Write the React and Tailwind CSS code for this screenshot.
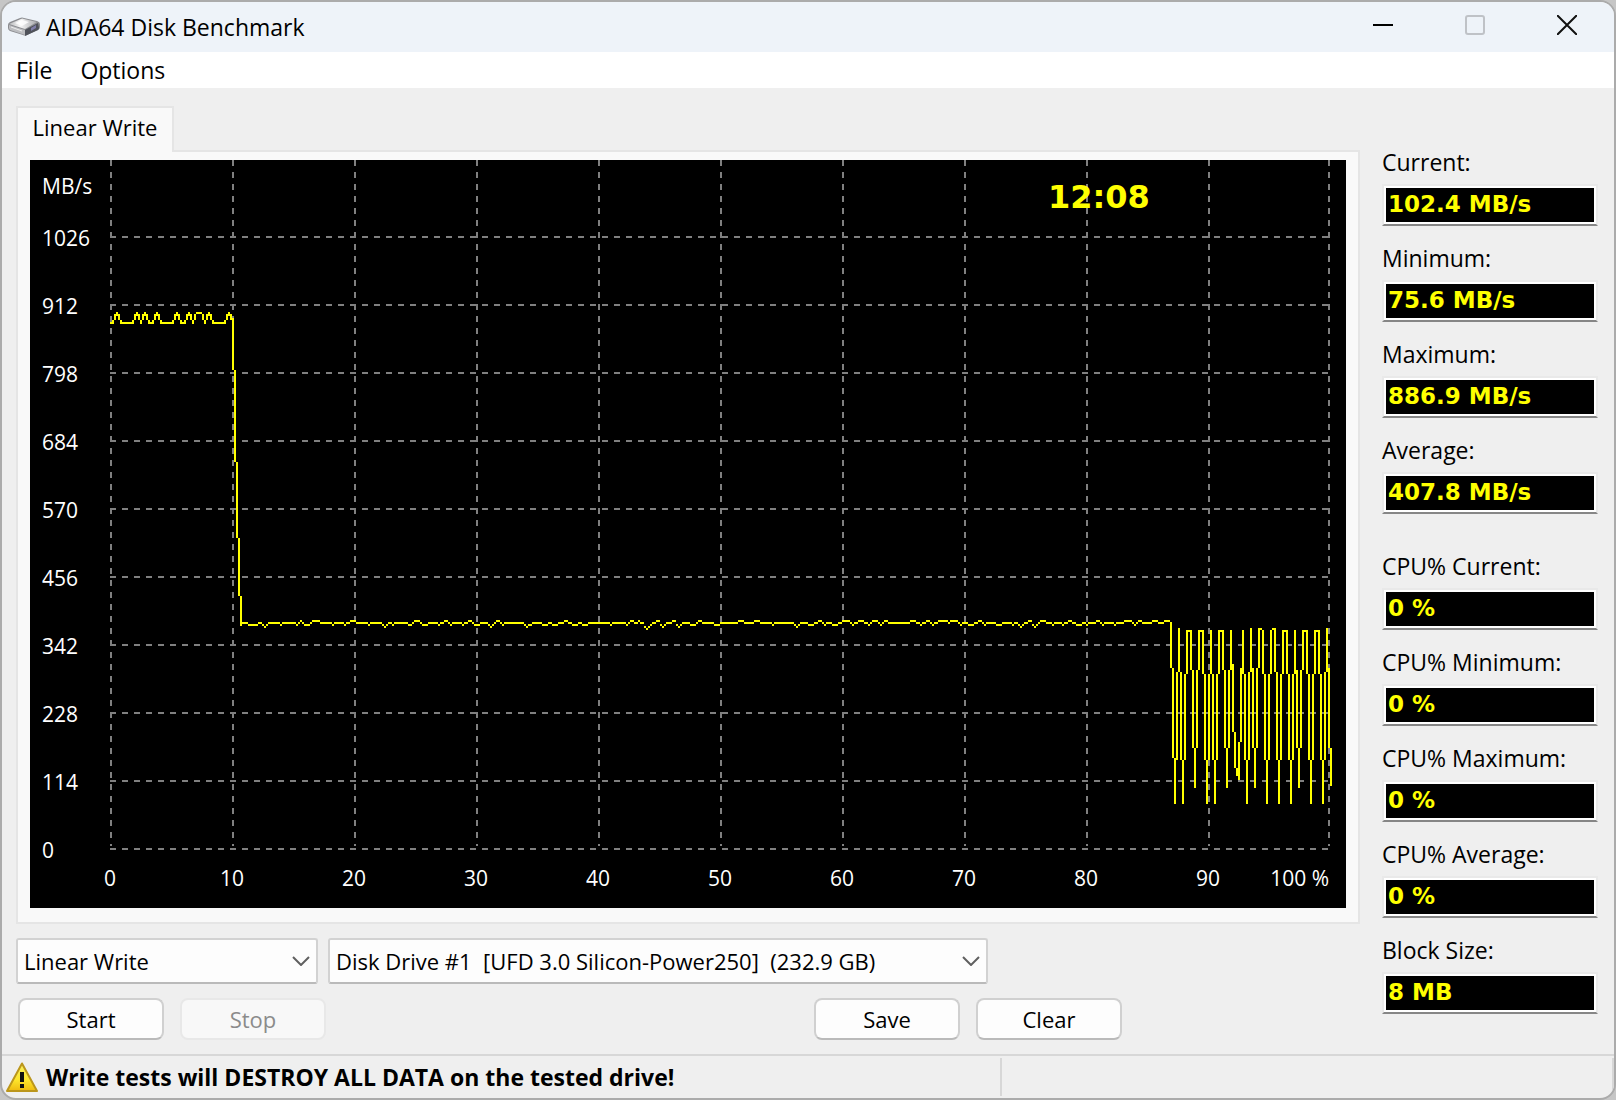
import React from 'react';

const speeds = [
  { id: 'current', label: 'Current:', value: '102.4 MB/s' },
  { id: 'minimum', label: 'Minimum:', value: '75.6 MB/s' },
  { id: 'maximum', label: 'Maximum:', value: '886.9 MB/s' },
  { id: 'average', label: 'Average:', value: '407.8 MB/s' },
];

const cpu = [
  { id: 'cpu-current', label: 'CPU% Current:', value: '0 %' },
  { id: 'cpu-minimum', label: 'CPU% Minimum:', value: '0 %' },
  { id: 'cpu-maximum', label: 'CPU% Maximum:', value: '0 %' },
  { id: 'cpu-average', label: 'CPU% Average:', value: '0 %' },
  { id: 'block-size', label: 'Block Size:', value: '8 MB' },
];

const yLabels = [1026, 912, 798, 684, 570, 456, 342, 228, 114, 0];
const xLabels = [0, 10, 20, 30, 40, 50, 60, 70, 80, 90];

// Columns where the fast cached part of the write peaks
const peaks = [43, 53, 57, 63, 73, 79, 83, 84, 85, 89, 99];

// Steady part of the write: [column, row], each level holds until the next column
const steady = [
  [106, 231], [109, 232], [114, 231], [116, 232], [117, 233], [118, 232], [119, 231], [125, 232],
  [126, 231], [133, 232], [134, 231], [135, 230], [136, 231], [137, 232], [140, 231], [141, 230],
  [145, 231], [151, 232], [152, 231], [157, 232], [158, 231], [160, 230], [163, 231], [169, 232],
  [170, 231], [176, 232], [177, 233], [178, 232], [179, 231], [181, 232], [182, 231], [189, 232],
  [191, 231], [192, 230], [195, 231], [196, 232], [199, 231], [204, 232], [205, 231], [207, 230],
  [209, 231], [210, 232], [211, 231], [216, 232], [217, 231], [219, 230], [221, 231], [222, 232],
  [225, 231], [229, 232], [230, 233], [231, 232], [232, 231], [233, 230], [235, 231], [236, 232],
  [237, 231], [247, 232], [248, 233], [249, 232], [251, 231], [256, 232], [259, 231], [261, 232],
  [264, 231], [267, 230], [269, 231], [271, 232], [274, 231], [276, 232], [279, 231], [290, 232],
  [291, 231], [298, 232], [299, 231], [300, 230], [302, 231], [304, 230], [305, 231], [307, 233],
  [308, 234], [309, 233], [310, 232], [311, 231], [313, 230], [315, 232], [316, 233], [317, 232],
  [318, 231], [321, 230], [323, 232], [324, 233], [325, 232], [326, 231], [330, 232], [333, 231],
  [334, 230], [336, 231], [342, 232], [345, 231], [354, 230], [357, 231], [362, 230], [365, 231],
  [371, 232], [372, 231], [382, 232], [383, 233], [384, 232], [385, 231], [389, 232], [392, 231],
  [394, 230], [396, 231], [397, 232], [398, 231], [401, 232], [404, 231], [406, 230], [410, 231],
  [411, 232], [412, 231], [414, 230], [417, 231], [419, 232], [420, 231], [421, 230], [424, 231],
  [425, 232], [426, 231], [427, 230], [429, 231], [440, 230], [443, 231], [445, 232], [446, 231],
  [448, 230], [450, 231], [451, 232], [452, 231], [454, 230], [459, 231], [460, 230], [464, 231],
  [465, 232], [466, 231], [469, 232], [472, 231], [474, 230], [476, 231], [477, 232], [478, 231],
  [483, 232], [486, 231], [491, 232], [492, 231], [494, 232], [495, 233], [496, 232], [497, 231],
  [499, 230], [501, 232], [502, 233], [503, 232], [504, 231], [505, 230], [508, 231], [511, 232],
  [512, 231], [516, 232], [517, 231], [519, 230], [521, 231], [523, 232], [526, 231], [528, 232],
  [529, 231], [533, 230], [535, 231], [536, 232], [537, 231], [542, 232], [543, 231], [547, 230],
  [551, 231], [552, 232], [553, 231], [554, 230], [556, 231], [561, 230], [564, 231], [567, 230],
  [570, 230],
];

// Unstable tail, one [top, bottom] pair per column starting at 570
const tail = [
  [231, 254], [254, 299], [299, 322], [256, 300], [234, 256], [256, 300], [300, 322], [257, 300],
  [235, 257], [235, 236], [235, 255], [255, 294], [294, 314], [255, 294], [235, 255], [235, 236],
  [235, 257], [257, 300], [300, 322], [257, 300], [235, 257], [257, 300], [300, 322], [257, 300],
  [235, 257], [235, 236], [235, 255], [255, 294], [294, 314], [255, 294], [235, 255], [252, 286],
  [286, 304], [304, 308], [291, 310], [254, 291], [235, 257], [257, 300], [300, 322], [256, 300],
  [234, 256], [254, 294], [294, 314], [254, 294], [234, 254], [234, 235], [235, 257], [257, 300],
  [300, 322], [257, 300], [235, 257], [234, 235], [234, 256], [256, 300], [300, 322], [257, 300],
  [235, 257], [235, 236], [235, 257], [257, 300], [300, 322], [257, 300], [235, 257], [255, 294],
  [294, 314], [255, 294], [235, 255], [235, 236], [235, 257], [257, 300], [300, 322], [257, 300],
  [235, 257], [235, 236], [235, 257], [257, 300], [300, 322], [256, 300], [234, 256], [254, 294],
  [294, 313],
];

// The sudden drop when the cache runs out, starting at column 101
const drop = [[79, 105], [105, 151], [151, 189], [189, 218], [218, 233]];

function bar(x, top, width, bottom) {
  return `M${x} ${top}H${x + width}V${bottom}H${x}Z`;
}

function buildTrace() {
  const parts = [];
  for (let x = 40; x < 101; x++) {
    const distance = Math.min(...peaks.map((p) => Math.abs(p - x)));
    if (distance === 0) {
      parts.push(bar(x, 76, 1, x > 82 && x < 86 ? 77 : 78));
    } else if (distance === 1) {
      parts.push(bar(x, 77, 1, 80));
    } else if (distance === 2) {
      parts.push(bar(x, 80, 1, 82));
    } else {
      parts.push(bar(x, 81, 1, 82));
    }
  }
  drop.forEach(([top, bottom], i) => parts.push(bar(101 + i, top, 1, bottom)));
  steady.slice(0, -1).forEach(([x, y], i) => parts.push(bar(x, y, steady[i + 1][0] - x, y + 1)));
  tail.forEach(([top, bottom], i) => parts.push(bar(570 + i, top, 1, bottom)));
  return parts.join('');
}

const trace = buildTrace();
const gridX = [40, 101, 162, 223, 284, 345, 406, 467, 528, 589, 649];

function Chart() {
  return (
    <svg viewBox="0 0 1316 748" className="block w-full bg-black" role="img" aria-label="Linear write speed">
      <g transform="scale(2)" stroke="#808080" strokeWidth="1" strokeDasharray="3 3" shapeRendering="crispEdges">
        {gridX.map((x) => (
          <line key={x} x1={x + 0.5} x2={x + 0.5} y1="0" y2="343" />
        ))}
        {yLabels.map((v, i) => (
          <line key={v} x1="40" x2="650" y1={38.5 + 34 * i} y2={38.5 + 34 * i} />
        ))}
      </g>
      <g className="fill-white font-['Open_Sans',sans-serif] text-[21px]">
        <text x="12" y="34">MB/s</text>
        {yLabels.map((v, i) => (
          <text key={v} x="12" y={86 + 68 * i}>{v}</text>
        ))}
        {xLabels.map((v, i) => (
          <text key={v} x={80 + 122 * i} y="726" textAnchor="middle">{v}</text>
        ))}
        <text x="1299" y="726" textAnchor="end">100 %</text>
      </g>
      <text x="1018" y="48" className="fill-[#ffff00] font-['DejaVu_Sans',sans-serif] text-[32px] font-bold">12:08</text>
      <path d={trace} transform="scale(2)" fill="#ffff00" shapeRendering="crispEdges" />
    </svg>
  );
}

function Readout({ id, label, value }) {
  return (
    <div className="pt-4">
      <label htmlFor={id} className="block h-8 text-[23px] leading-8">{label}</label>
      <div className="mt-1.5 border-2 border-[#e9e9e9] border-b-[#868686]">
        <output
          id={id}
          className="block h-[38px] border-2 border-white bg-black pl-0.5 font-['DejaVu_Sans',sans-serif] text-[23px] leading-8 font-bold text-[#ffff00]"
        >
          {value}
        </output>
      </div>
    </div>
  );
}

function Dropdown({ label, text, className }) {
  return (
    <div className={`relative ${className}`}>
      <select
        aria-label={label}
        className="h-[46px] w-full appearance-none rounded-[3px] border-2 border-[#d2d2d2] border-b-[#bababa] bg-[#fdfdfd] pl-1.5"
      >
        <option>{text}</option>
      </select>
      <svg viewBox="0 0 18 10" className="pointer-events-none absolute top-[18px] right-2 h-2.5 w-[18px]" fill="none" stroke="#606060" strokeWidth="2">
        <path d="M1 1l8 8 8-8" />
      </svg>
    </div>
  );
}

function PushButton({ children, disabled, className = '' }) {
  return (
    <button
      disabled={disabled}
      className={`h-[42px] w-[146px] rounded-lg border-2 border-[#d0d0d0] border-b-[#bababa] bg-[#fdfdfd] disabled:border-[#e8e8e8] disabled:bg-[#f8f8f8] disabled:text-[#8b8b8b] ${className}`}
    >
      {children}
    </button>
  );
}

function DriveIcon() {
  return (
    <svg viewBox="0 0 32 20" className="h-5 w-8">
      <defs>
        <linearGradient id="lid" x1="0" y1="0" x2="1" y2="0">
          <stop offset="0" stopColor="#b9babc" />
          <stop offset="0.4" stopColor="#f6f6f6" />
          <stop offset="1" stopColor="#a9aaad" />
        </linearGradient>
      </defs>
      <path d="M0 8q0-2 2-3l10-4q2-1 4 0l13 3q3 1 3 3v3q0 2-2 3l-11 5q-2 1-4 0L2 14q-2-1-2-3z" fill="#8b8c90" />
      <path d="M1 7l12-5q1-1 3 0l13 3-12 7z" fill="url(#lid)" />
      <path d="M7 6l7-3 7 2-7 4z" fill="#ffffff" opacity="0.8" />
      <path d="M1 8l16 5v5L2 13q-1-1-1-2z" fill="#bdbec1" />
      <path d="M17 13l13-7 1 5q0 1-1 2l-13 6z" fill="#4f525a" />
      <path d="M23 11l5-3v3l-5 3z" fill="#7f7da8" />
      <path d="M3 10l11 4" stroke="#ededed" strokeWidth="1" />
    </svg>
  );
}

function WarningIcon() {
  return (
    <svg viewBox="0 0 32 30" className="h-[30px] w-8">
      <defs>
        <linearGradient id="warn" x1="0" y1="0" x2="0" y2="1">
          <stop offset="0" stopColor="#f7ef62" />
          <stop offset="0.6" stopColor="#fde52c" />
          <stop offset="1" stopColor="#eeb90e" />
        </linearGradient>
      </defs>
      <path d="M16 1.5L31 29H1z" fill="url(#warn)" stroke="#bb961c" strokeWidth="2" strokeLinejoin="round" />
      <path d="M14 10h4v10h-4zM14 22h4v4h-4z" fill="#111111" />
    </svg>
  );
}

export default function App() {
  return (
    <div className="min-h-screen bg-[#c6c6c6] flex font-['Open_Sans',sans-serif] text-[22px] leading-8 text-black">
      <div className="flex flex-1 flex-col overflow-hidden rounded-2xl border-2 border-[#ababab] bg-[#efefef]">
        {/* Title bar */}
        <header className="flex h-[50px] items-center bg-[#eef3f9] pr-px pl-1.5">
          <DriveIcon />
          <h1 className="ml-1.5 flex-1 text-[23px]">AIDA64 Disk Benchmark</h1>
          <button aria-label="Minimize" className="flex h-full w-[92px] items-center justify-center">
            <svg viewBox="0 0 20 20" className="mb-1 size-5" stroke="#000000" strokeWidth="2">
              <path d="M0 10h20" />
            </svg>
          </button>
          <button aria-label="Maximize" disabled className="flex h-full w-[92px] items-center justify-center">
            <svg viewBox="0 0 20 20" className="mb-1 size-5" fill="none" stroke="#bfc2c7" strokeWidth="2">
              <rect x="1" y="1" width="18" height="18" rx="2" />
            </svg>
          </button>
          <button aria-label="Close" className="flex h-full w-[92px] items-center justify-center">
            <svg viewBox="0 0 20 20" className="mb-1 size-5" stroke="#111111" strokeWidth="2">
              <path d="M0 0l20 20M20 0L0 20" />
            </svg>
          </button>
        </header>

        {/* Menu */}
        <nav className="flex h-9 items-center gap-7 bg-white pl-3.5 text-[23px]">
          <button>File</button>
          <button>Options</button>
        </nav>

        <main className="flex gap-[22px] pr-4 pl-3.5">
          <div className="min-w-0 flex-1 pt-[18px]">
            <div role="tablist" className="flex">
              <button
                role="tab"
                aria-selected="true"
                className="relative -mb-0.5 h-[46px] w-[158px] border-2 border-b-0 border-[#e5e5e5] bg-[#f9f9f9] pb-1.5"
              >
                Linear Write
              </button>
            </div>
            <div className="border-2 border-[#e5e5e5] bg-[#f9f9f9] px-3 pt-2 pb-3.5">
              <Chart />
            </div>

            <div className="mt-3.5 flex gap-2.5">
              <Dropdown label="Test" text="Linear Write" className="w-[302px]" />
              <Dropdown
                label="Drive"
                text={'Disk Drive #1\u00a0 [UFD 3.0 Silicon-Power250]\u00a0 (232.9 GB)'}
                className="w-[660px]"
              />
            </div>
            <div className="mt-3.5 flex gap-4 pl-0.5">
              <PushButton>Start</PushButton>
              <PushButton disabled>Stop</PushButton>
              <PushButton className="ml-[472px]">Save</PushButton>
              <PushButton>Clear</PushButton>
            </div>
          </div>

          {/* Readouts */}
          <aside className="w-[216px] shrink-0 pt-[42px]">
            {speeds.map((item) => (
              <Readout key={item.id} {...item} />
            ))}
            <div className="mt-5">
              {cpu.map((item) => (
                <Readout key={item.id} {...item} />
              ))}
            </div>
          </aside>
        </main>

        {/* Status bar */}
        <footer className="mt-auto flex h-11 items-center border-t-2 border-[#d7d7d7] pl-1">
          <WarningIcon />
          <p className="ml-2 flex-1 text-[23px] font-bold">Write tests will DESTROY ALL DATA on the tested drive!</p>
          <div className="h-[38px] w-[614px] border-x-2 border-[#d7d7d7]" />
        </footer>
      </div>
    </div>
  );
}
